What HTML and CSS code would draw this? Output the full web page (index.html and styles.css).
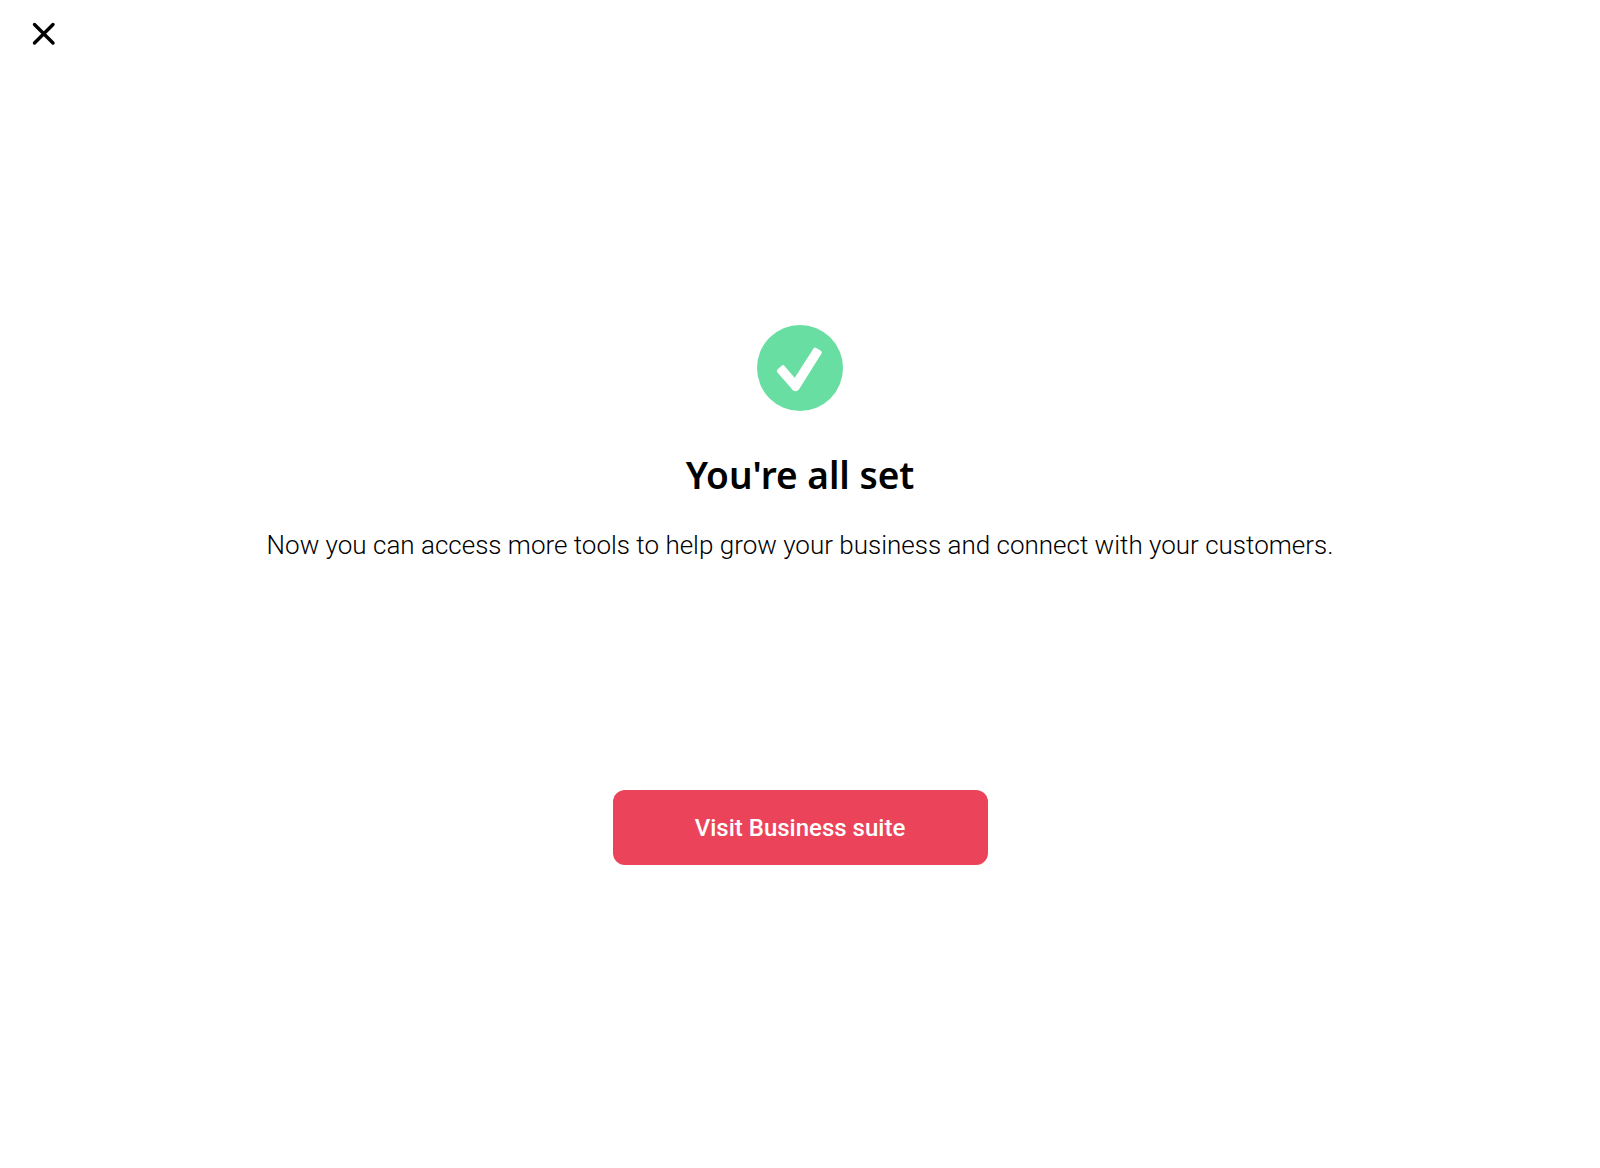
FILE: index.html
```html
<!DOCTYPE html>
<html lang="en">
<head>
    <meta charset="UTF-8">
    <meta name="viewport" content="width=device-width, initial-scale=1.0">
    <title>You're all set</title>
    <link rel="stylesheet" href="styles.css">
</head>
<body>

    <header class="top-bar">
        <button class="close" type="button" aria-label="Close">
            <svg width="24" height="24" viewBox="0 0 24 24" fill="none" stroke="#000" stroke-width="3.4" stroke-linecap="round">
                <path d="M2.5 2.5 21 21M21 2.5 2.5 21"/>
            </svg>
        </button>
    </header>

    <main class="content">
        <svg class="check" viewBox="0 0 86 86" aria-hidden="true">
            <circle cx="43" cy="43" r="43" fill="#69dea3"/>
            <path d="M21.8 46 26 42.2 38 56.2 58.2 24.6 62.8 27.4 40.4 63.3Q38.7 65.3 36.8 63.3Z" fill="#fff" stroke="#fff" stroke-width="4" stroke-linejoin="round"/>
        </svg>
        <h1>You're all set</h1>
        <p>Now you can access more tools to help grow your business and connect with your customers.</p>
        <button class="visit" type="button">Visit Business suite</button>
    </main>

</body>
</html>
```
FILE: styles.css
```css
* {
    box-sizing: border-box;
}
body {
    margin: 0;
    min-height: 100vh;
    font-family: Roboto, sans-serif;
    background-color: #fff;
    color: #000;
}
.top-bar {
    display: flex;
    padding: 22px 32px;
}
.close {
    display: flex;
    padding: 0;
    border: none;
    background: none;
    cursor: pointer;
}
.content {
    display: flex;
    flex-direction: column;
    align-items: center;
    padding: 257px 20px 60px;
    text-align: center;
}
.check {
    width: 86px;
    height: 86px;
}
h1 {
    margin: 40px 0 0;
    font-family: "Noto Sans", sans-serif;
    font-size: 37px;
    line-height: 48px;
    font-weight: 600;
}
p {
    margin: 28px 0 0;
    font-size: 26px;
    line-height: 36px;
    font-weight: 300;
}
.visit {
    width: 375px;
    max-width: 100%;
    height: 75px;
    margin-top: 227px;
    border: none;
    border-radius: 12px;
    background-color: #eb445a;
    color: #fff;
    font-family: inherit;
    font-size: 24px;
    font-weight: 500;
    cursor: pointer;
}
```
